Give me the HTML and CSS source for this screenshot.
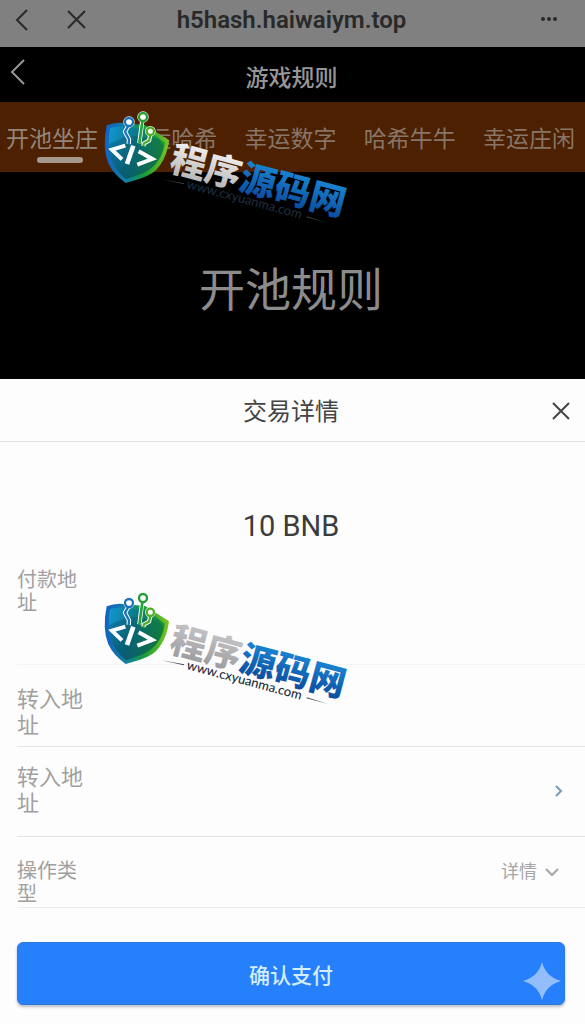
FILE: index.html
```html
<!DOCTYPE html>
<html lang="zh-CN">
<head>
	<meta charset="utf-8">
	<meta name="viewport" content="width=device-width, initial-scale=1">
	<title>游戏规则</title>
	<link rel="stylesheet" href="styles.css">
</head>
<body>
	<!-- shared logo -->
	<svg class="defs" width="0" height="0" aria-hidden="true">
		<defs>
			<linearGradient id="edge" x1="0" y1="0" x2="1" y2="0">
				<stop offset="0" stop-color="#1262c4"/>
				<stop offset=".35" stop-color="#12809f"/>
				<stop offset=".6" stop-color="#149a3c"/>
				<stop offset="1" stop-color="#7cc51c"/>
			</linearGradient>
			<linearGradient id="face" x1="0" y1="0" x2="1" y2=".3">
				<stop offset="0" stop-color="#1496d6"/>
				<stop offset=".5" stop-color="#0a7a86"/>
				<stop offset="1" stop-color="#1a9c2c"/>
			</linearGradient>
			<linearGradient id="shade" x1="0" y1="0" x2="0" y2="1">
				<stop offset="0" stop-color="#053c5c" stop-opacity=".25"/>
				<stop offset="1" stop-color="#053c5c" stop-opacity=".5"/>
			</linearGradient>
			<linearGradient id="blue" x1="0" y1="0" x2="0" y2="1">
				<stop offset=".1" stop-color="#1c8fdc"/>
				<stop offset=".9" stop-color="#0c4a9c"/>
			</linearGradient>
			<linearGradient id="silver" x1="0" y1="0" x2="0" y2="1">
				<stop offset=".1" stop-color="#fafafa"/>
				<stop offset=".9" stop-color="#b4b4b6"/>
			</linearGradient>
			<linearGradient id="steel" x1="0" y1="0" x2="0" y2="1">
				<stop offset=".1" stop-color="#cacacc"/>
				<stop offset=".9" stop-color="#9c9ca0"/>
			</linearGradient>
			<symbol id="badge" viewBox="0 0 270 390">
				<path fill="url(#edge)" d="M50 76Q75 66 100 69L165 75Q205 100 237 121Q232 165 210 196Q192 224 150 236L107 249Q70 223 55 190Q36 145 50 76Z"/>
				<path fill="url(#face)" d="M60 84Q95 75 125 84L170 88Q200 110 225 128Q220 164 200 189Q180 213 145 225L108 238Q78 214 64 180Q50 140 60 84Z"/>
				<path fill="url(#shade)" d="M57 132L115 106L205 116L221 138Q214 170 198 190Q180 213 145 225L108 238Q78 214 64 180Q57 160 57 132Z"/>
				<g fill="none" stroke="#fff" stroke-width="13" stroke-linejoin="round">
					<path d="M115 78L105 95L117 118L116 132M157 60L148 130M181 104L177 122L162 130L160 138"/>
				</g>
				<g fill="#fff">
					<circle cx="117" cy="66" r="17"/>
					<circle cx="159" cy="51" r="17"/>
					<circle cx="181" cy="94" r="16"/>
				</g>
				<g fill="none" stroke-width="7" stroke-linejoin="round">
					<path stroke="#1872bd" d="M115 78L105 95L117 118L116 132"/>
					<path stroke="#25a23b" stroke-width="8" d="M157 65L148 130"/>
					<path stroke="#4eae25" d="M181 106L177 122L162 130L160 138"/>
					<circle cx="117" cy="66" r="12" stroke="#1872bd"/>
					<circle cx="159" cy="51" r="12" stroke="#259c35"/>
					<circle cx="181" cy="94" r="11" stroke="#4eae25"/>
				</g>
				<g fill="none" stroke="#fff" stroke-width="12">
					<path d="M106 137L66 149L96 178M146 154L187 177L142 194"/>
					<path stroke-width="14" d="M130 137L111 192"/>
				</g>
			</symbol>
		</defs>
	</svg>

	<header class="browser">
		<button class="icon" aria-label="后退"><svg width="24" height="24" viewBox="0 0 24 24"><path d="M17 2L7 12L17 22"/></svg></button>
		<button class="icon" aria-label="关闭"><svg width="24" height="24" viewBox="0 0 24 24"><path d="M4 3L21 20M21 3L4 20"/></svg></button>
		<span class="url">h5hash.haiwaiym.top</span>
		<button class="icon more" aria-label="更多"><svg width="24" height="24" viewBox="0 0 24 24"><circle cx="6" cy="11" r="2"/><circle cx="12" cy="11" r="2"/><circle cx="18" cy="11" r="2"/></svg></button>
	</header>

	<div class="nav">
		<button class="icon" aria-label="返回"><svg width="24" height="30" viewBox="0 0 24 30"><path d="M18 3L6 15L18 27"/></svg></button>
		<h1>游戏规则</h1>
	</div>

	<nav class="tabs">
		<a class="active" href="#">开池坐庄</a>
		<a href="#">幸运哈希</a>
		<a href="#">幸运数字</a>
		<a href="#">哈希牛牛</a>
		<a href="#">幸运庄闲</a>
	</nav>

	<main class="hero">开池规则</main>

	<section class="sheet">
		<div class="sheet-head">
			<h2>交易详情</h2>
			<button class="icon" aria-label="关闭"><svg width="24" height="24" viewBox="0 0 24 24"><path d="M4 4L20 20M20 4L4 20"/></svg></button>
		</div>
		<p class="amount">10 BNB</p>
		<div class="rows">
			<div class="row pay"><span class="label">付款地址</span></div>
			<div class="row to"><span class="label big">转入地址</span></div>
			<div class="row pick">
				<span class="label big">转入地址</span>
				<button class="icon go" aria-label="选择转入地址"><svg width="14" height="14" viewBox="0 0 14 14"><path d="M5 2L10 7L5 12"/></svg></button>
			</div>
			<div class="row type">
				<label class="label" for="type">操作类型</label>
				<span class="choice">
					<select id="type"><option>详情</option></select>
					<svg width="14" height="14" viewBox="0 0 14 14"><path d="M1 4L7 10L13 4"/></svg>
				</span>
			</div>
		</div>
		<div class="foot">
			<button class="confirm">确认支付</button>
			<svg class="spark" width="38" height="38" viewBox="0 0 38 38"><path d="M19 0Q23 15 38 19Q23 23 19 38Q15 23 0 19Q15 15 19 0Z"/></svg>
		</div>
	</section>

	<svg class="mark mark-top" width="270" height="130" viewBox="0 0 270 130">
		<use href="#badge" width="90" height="130"/>
		<g transform="translate(78 70) rotate(15)">
			<text class="brand" fill="url(#silver)">程序<tspan fill="url(#blue)">源码网</tspan></text>
		</g>
		<g transform="translate(96 88) rotate(15)">
			<text class="site">www.cxyuanma.com</text>
			<path class="dash" d="M-26 -2L-3 -4V-3ZM124 -3V-4L146 -3Z"/>
		</g>
	</svg>
	<svg class="mark mark-low" width="270" height="130" viewBox="0 0 270 130">
		<use href="#badge" width="90" height="130"/>
		<g transform="translate(78 70) rotate(15)">
			<text class="brand" fill="url(#steel)">程序<tspan fill="url(#blue)">源码网</tspan></text>
		</g>
		<g transform="translate(96 88) rotate(15)">
			<text class="site">www.cxyuanma.com</text>
			<path class="dash" d="M-26 -2L-3 -4V-3ZM124 -3V-4L146 -3Z"/>
		</g>
	</svg>
</body>
</html>
```
FILE: styles.css
```css
*{
  box-sizing:border-box;
}
body{
  margin:0;
  position:relative;
  min-height:100vh;
  display:flex;
  flex-direction:column;
  background-color:black;
  font-family:Roboto, "Noto Sans CJK SC", sans-serif;
}
h1, h2, p{
  margin:0;
  font-weight:400;
}
.defs{
  position:absolute;
}
.icon{
  display:flex;
  padding:0;
  border:0;
  background:none;
  color:inherit;
}
.icon svg, .choice svg{
  fill:none;
  stroke:currentColor;
  stroke-width:2;
}
.browser{
  display:grid;
  grid-template-columns:54px 54px 1fr 96px;
  align-items:center;
  height:47px;
  padding:0 24px 8px 10px;
  background-color:#808080;
  color:#292929;
}
.url{
  text-align:center;
  font-size:24px;
  font-weight:600;
  line-height:28px;
}
.browser .more{
  justify-self:end;
}
.more svg{
  fill:currentColor;
  stroke:none;
}
.nav{
  display:grid;
  grid-template-columns:30px 1fr 30px;
  align-items:center;
  height:55px;
  padding:0 8px 0 6px;
  color:#969696;
}
.nav .icon{
  padding-bottom:5px;
}
.nav h1{
  padding-top:8px;
  text-align:center;
  font-size:23px;
  font-weight:500;
  line-height:30px;
}
.tabs{
  display:flex;
  justify-content:space-between;
  height:70px;
  padding:20px 10px 0 6px;
  background-color:#4c2000;
}
.tabs a{
  color:#877568;
  font-size:23px;
  line-height:35px;
  text-decoration:none;
}
.tabs .active{
  color:#94857b;
}
.active::after{
  content:"";
  display:block;
  width:46px;
  height:6px;
  margin-left:31px;
  border-radius:3px;
  background-color:#a6988f;
}
.hero{
  height:207px;
  padding:85px 3px 0 0;
  color:#8c8c8c;
  text-align:center;
  font-size:46px;
  line-height:66px;
}
.sheet{
  flex:1;
  background-color:#fdfdfd;
  color:#444;
}
.sheet-head{
  display:grid;
  grid-template-columns:1fr auto 1fr;
  align-items:center;
  height:63px;
  padding:2px 12px 0 9px;
  border-bottom:1px solid #e2e2e2;
}
.sheet-head h2{
  grid-column:2;
  padding-top:2px;
  font-size:24px;
  line-height:32px;
}
.sheet-head .icon{
  justify-self:end;
}
.amount{
  padding:66px 3px 14px 0;
  text-align:center;
  color:#3c3c3c;
  font-size:29px;
  line-height:36px;
}
.rows{
  padding-left:17px;
}
.row{
  display:flex;
  align-items:center;
  justify-content:space-between;
  padding-right:20px;
  border-bottom:1px solid #e4e4e4;
}
.label{
  width:66px;
  color:#a0a0a0;
  font-size:20px;
  line-height:23px;
}
.big{
  font-size:22px;
  line-height:26px;
}
.pay{
  padding-top:11px;
  padding-bottom:49px;
  border-color:#f4f4f4;
}
.to{
  padding-top:22px;
  padding-bottom:7px;
}
.pick{
  padding-top:18px;
  padding-bottom:19px;
}
.type{
  align-items:flex-start;
  padding-top:23px;
  padding-bottom:1px;
  border-color:#ececec;
}
.go{
  color:#6fa0b4;
}
.choice{
  display:flex;
  align-items:center;
  gap:8px;
  padding-right:6px;
  color:#a6a6a6;
}
.choice select{
  appearance:none;
  padding:0;
  border:0;
  background:none;
  color:inherit;
  font-family:inherit;
  font-size:18px;
  line-height:23px;
}
.foot{
  position:relative;
  padding:34px 20px 19px 17px;
}
.confirm{
  display:block;
  width:100%;
  height:63px;
  border:1px solid #3079dc;
  border-radius:6px;
  background-color:#2680fb;
  box-shadow:0 2px 3px #b8bcc4;
  color:#d2edfc;
  font-family:inherit;
  font-size:21px;
  font-weight:500;
}
.spark{
  position:absolute;
  right:24px;
  bottom:24px;
  fill:#93bdfd;
}
.mark{
  position:absolute;
  left:90px;
  pointer-events:none;
}
.mark-top{
  top:100px;
}
.mark-low{
  top:581px;
}
.brand{
  font-family:"Noto Sans CJK SC", sans-serif;
  font-size:36px;
  font-weight:900;
}
.site{
  font-family:Lato, sans-serif;
  font-size:13px;
  font-weight:500;
  fill:#1c2c3c;
}
.dash{
  fill:#3a444e;
}
```
